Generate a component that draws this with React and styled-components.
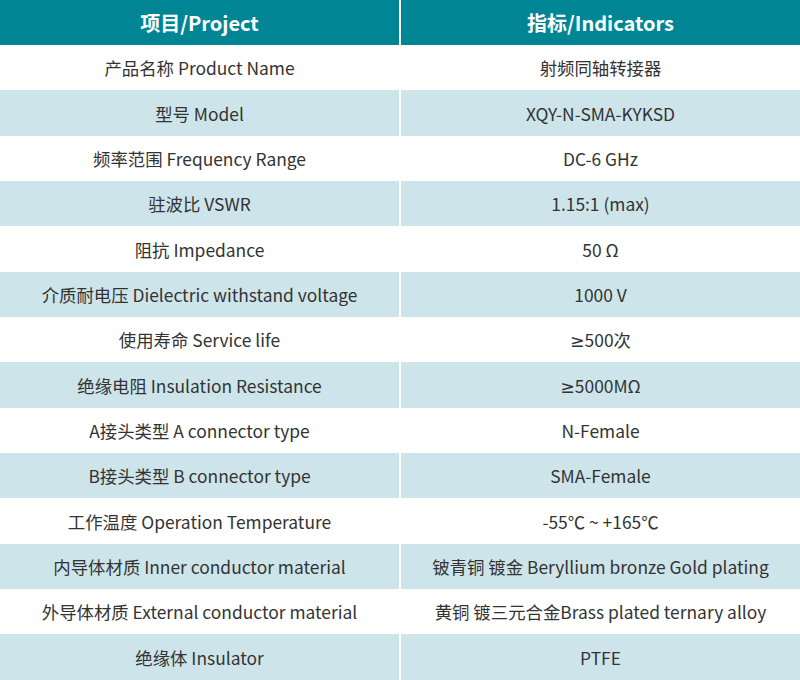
import styled, { createGlobalStyle } from "styled-components";

const GlobalStyle = createGlobalStyle`
  html, body {
    margin: 0;
    padding: 0;
    background: #ffffff;
  }

  body {
    font-family: "Noto Sans CJK SC", "Noto Sans", sans-serif;
  }
`;

const SpecTable = styled.table`
  width: 800px;
  height: 680px;
  border-collapse: collapse;
  table-layout: fixed;
`;

const HeadCell = styled.th`
  background-color: #008595;
  color: #ffffff;
  font-size: 20px;
  font-weight: 700;
  text-align: center;
  padding: 0;
  height: 45px;

  &:first-child {
    width: 399px;
    border-right: 2px solid #ffffff;
  }
`;

const Row = styled.tr`
  background-color: ${(p) => (p.$shaded ? "#cde5ea" : "#ffffff")};
`;

const Cell = styled.td`
  color: #333333;
  font-size: 17.4px;
  text-align: center;
  padding: 0;
  white-space: nowrap;

  &:first-child {
    border-right: 2px solid #ffffff;
  }
`;

// the ≥ sign is narrow in the reference, not the full-width CJK glyph
const Sign = styled.span`
  font-family: "Noto Sans", "DejaVu Sans", sans-serif;
`;

const withSigns = (text) =>
  text.startsWith("≥") ? (
    <>
      <Sign>≥</Sign>
      {text.slice(1)}
    </>
  ) : (
    text
  );

const specs = [
  ["产品名称 Product Name", "射频同轴转接器"],
  ["型号 Model", "XQY-N-SMA-KYKSD"],
  ["频率范围 Frequency Range", "DC-6 GHz"],
  ["驻波比 VSWR", "1.15:1 (max)"],
  ["阻抗 Impedance", "50 Ω"],
  ["介质耐电压 Dielectric withstand voltage", "1000 V"],
  ["使用寿命 Service life", "≥500次"],
  ["绝缘电阻 Insulation Resistance", "≥5000MΩ"],
  ["A接头类型 A connector type", "N-Female"],
  ["B接头类型 B connector type", "SMA-Female"],
  ["工作温度 Operation Temperature", "-55℃ ~ +165℃"],
  ["内导体材质 Inner conductor material", "铍青铜 镀金 Beryllium bronze Gold plating"],
  ["外导体材质 External conductor material", "黄铜 镀三元合金Brass plated ternary alloy"],
  ["绝缘体 Insulator", "PTFE"],
];

const App = () => {
  return (
    <>
      <GlobalStyle />
      <SpecTable>
        <thead>
          <tr>
            <HeadCell>项目/Project</HeadCell>
            <HeadCell>指标/Indicators</HeadCell>
          </tr>
        </thead>
        <tbody>
          {specs.map(([item, value], i) => (
            <Row key={item} $shaded={i % 2 === 1}>
              <Cell>{item}</Cell>
              <Cell>{withSigns(value)}</Cell>
            </Row>
          ))}
        </tbody>
      </SpecTable>
    </>
  );
};

export default App;
